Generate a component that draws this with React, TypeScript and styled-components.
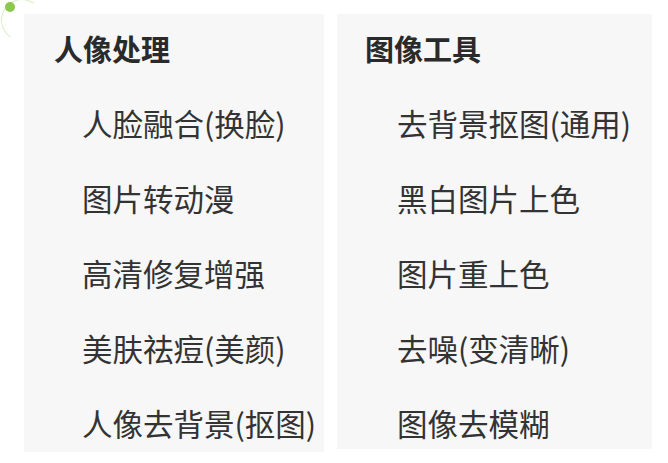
import React from "react";
import styled, { createGlobalStyle } from "styled-components";

const Global = createGlobalStyle`
  html, body { margin: 0; padding: 0; background: #ffffff; }
  body { font-family: "Noto Sans CJK SC", "Noto Sans", sans-serif; color: #333333; }
`;

const Page = styled.div`
  position: relative;
  display: flex;
  align-items: flex-start;
  gap: 13px;
  padding: 14px 0 0 24px;
  width: 668px;
  height: 463px;
  box-sizing: border-box;
  overflow: hidden;
`;

const Dot = styled.span`
  position: absolute;
  left: 5px;
  top: 2px;
  width: 10px;
  height: 10px;
  border-radius: 50%;
  background: #8cc84b;
`;

const Arc = styled.span`
  position: absolute;
  left: 1px;
  top: -1px;
  width: 40px;
  height: 40px;
  border-radius: 50%;
  border-top: 1px solid rgba(140, 200, 75, 0.35);
  border-left: 1px solid rgba(140, 200, 75, 0.35);
  border-right: 1px solid transparent;
  border-bottom: 1px solid transparent;
  transform: rotate(-10deg);
`;

const Panel = styled.section<{ $w: number; $h: number; $pl: number }>`
  display: flex;
  flex-direction: column;
  width: ${(p) => p.$w}px;
  height: ${(p) => p.$h}px;
  box-sizing: border-box;
  padding: 14px 0 0 ${(p) => p.$pl}px;
  background: #f7f7f7;
`;

const Heading = styled.h2`
  margin: 0;
  font-size: 29px;
  line-height: 40px;
  font-weight: 700;
  color: #2a2a2a;
  white-space: nowrap;
`;

const List = styled.ul<{ $indent: number }>`
  list-style: none;
  margin: 35px 0 0 0;
  padding: 0 0 0 ${(p) => p.$indent}px;
  display: flex;
  flex-direction: column;
  gap: 35px;
`;

const Item = styled.li`
  font-size: 30.5px;
  line-height: 40px;
  color: #333333;
  white-space: nowrap;
`;

const columns = [
  {
    title: "人像处理",
    w: 300,
    h: 438,
    pl: 30,
    indent: 28,
    items: ["人脸融合(换脸)", "图片转动漫", "高清修复增强", "美肤祛痘(美颜)", "人像去背景(抠图)"],
  },
  {
    title: "图像工具",
    w: 315,
    h: 435,
    pl: 28,
    indent: 32,
    items: ["去背景抠图(通用)", "黑白图片上色", "图片重上色", "去噪(变清晰)", "图像去模糊"],
  },
];

export default function App() {
  return (
    <>
      <Global />
      <Page>
        <Arc />
        <Dot />
        {columns.map((c) => (
          <Panel key={c.title} $w={c.w} $h={c.h} $pl={c.pl}>
            <Heading>{c.title}</Heading>
            <List $indent={c.indent}>
              {c.items.map((t) => (
                <Item key={t}>{t}</Item>
              ))}
            </List>
          </Panel>
        ))}
      </Page>
    </>
  );
}
